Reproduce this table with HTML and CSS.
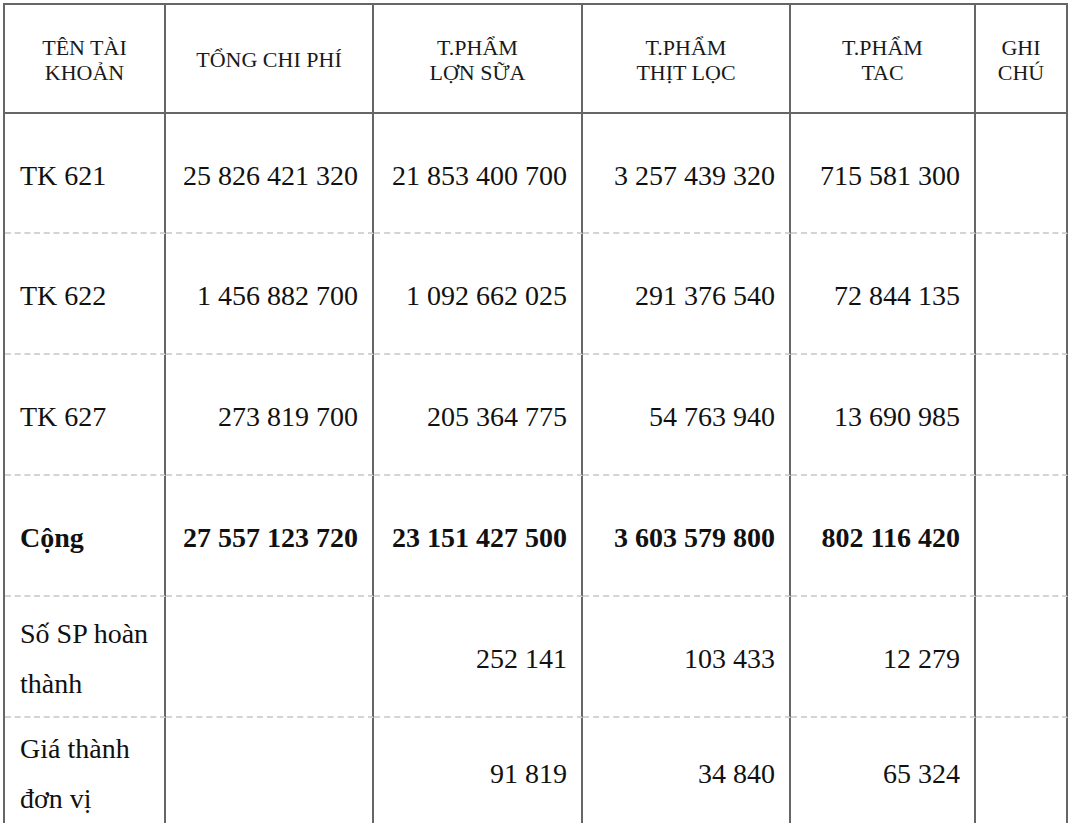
FILE: index.html
```html
<!DOCTYPE html>
<html lang="vi">
<head>
<meta charset="utf-8">
<title>Bảng tính giá thành</title>
<link rel="stylesheet" href="styles.css">
</head>
<body>
<table class="cost">
  <colgroup>
    <col class="c1"><col class="c2"><col class="c3"><col class="c4"><col class="c5"><col class="c6">
  </colgroup>
  <thead>
    <tr class="head">
      <th>TÊN TÀI<br>KHOẢN</th>
      <th>TỔNG CHI PHÍ</th>
      <th>T.PHẨM<br>LỢN SỮA</th>
      <th>T.PHẨM<br>THỊT LỌC</th>
      <th>T.PHẨM<br>TAC</th>
      <th>GHI<br>CHÚ</th>
    </tr>
  </thead>
  <tbody>
    <tr class="r1">
      <td class="name">TK 621</td>
      <td class="num">25 826 421 320</td>
      <td class="num">21 853 400 700</td>
      <td class="num">3 257 439 320</td>
      <td class="num">715 581 300</td>
      <td></td>
    </tr>
    <tr class="r">
      <td class="name">TK 622</td>
      <td class="num">1 456 882 700</td>
      <td class="num">1 092 662 025</td>
      <td class="num">291 376 540</td>
      <td class="num">72 844 135</td>
      <td></td>
    </tr>
    <tr class="r">
      <td class="name">TK 627</td>
      <td class="num">273 819 700</td>
      <td class="num">205 364 775</td>
      <td class="num">54 763 940</td>
      <td class="num">13 690 985</td>
      <td></td>
    </tr>
    <tr class="r total">
      <td class="name">Cộng</td>
      <td class="num">27 557 123 720</td>
      <td class="num">23 151 427 500</td>
      <td class="num">3 603 579 800</td>
      <td class="num">802 116 420</td>
      <td></td>
    </tr>
    <tr class="r">
      <td class="name">Số SP hoàn thành</td>
      <td class="num"></td>
      <td class="num">252 141</td>
      <td class="num">103 433</td>
      <td class="num">12 279</td>
      <td></td>
    </tr>
    <tr class="r last">
      <td class="name">Giá thành đơn vị</td>
      <td class="num"></td>
      <td class="num">91 819</td>
      <td class="num">34 840</td>
      <td class="num">65 324</td>
      <td></td>
    </tr>
  </tbody>
</table>
</body>
</html>
```

FILE: styles.css
```css
html, body {
  margin: 0;
  padding: 0;
  background: #ffffff;
}

body {
  padding: 3px 0 0 3px;
  font-family: "Liberation Serif", "Times New Roman", serif;
  color: #111111;
}

.cost {
  border-collapse: separate;
  border-spacing: 0;
  table-layout: fixed;
  width: 1065px;
  border-left: 2px solid #666666;
  border-top: 2px solid #666666;
}

.c1 { width: 161px; }
.c2 { width: 208px; }
.c3 { width: 209px; }
.c4 { width: 208px; }
.c5 { width: 185px; }
.c6 { width: 92px; }

.cost th,
.cost td {
  border-right: 2px solid #666666;
  padding: 0 14px;
  vertical-align: middle;
  box-sizing: border-box;
}

.cost th {
  font-weight: normal;
  font-size: 22px;
  line-height: 25px;
  color: #1a1a1a;
  text-align: center;
  border-bottom: 2px solid #666666;
  height: 109px;
  padding-top: 2px;
}

.cost td {
  font-size: 28px;
  line-height: 50px;
  border-bottom: 2px dashed #d4d4d4;
  height: 121px;
  padding-top: 5px;
}

.cost .r1 td {
  height: 120px;
}

.cost .last td {
  height: 114px;
  padding-top: 0;
}

.cost td.name {
  text-align: left;
  padding-left: 15px;
  padding-right: 8px;
}

.cost td.num {
  text-align: right;
}

.total td {
  font-weight: bold;
}
```
